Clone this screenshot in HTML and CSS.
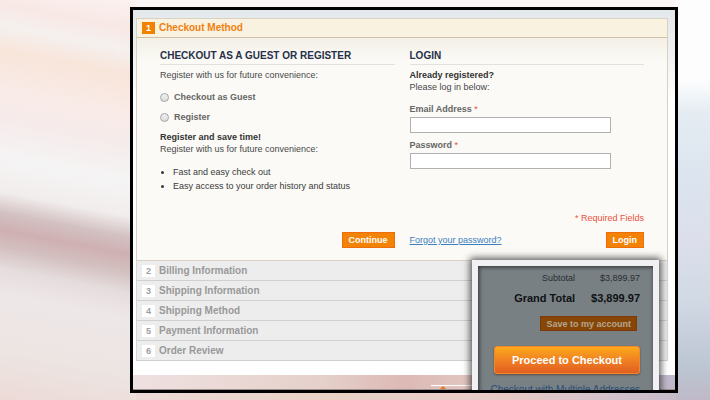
FILE: index.html
```html
<!DOCTYPE html>
<html lang="en">
<head>
<meta charset="utf-8">
<title>Checkout</title>
<link rel="stylesheet" href="styles.css">
</head>
<body>
<main class="frame">
  <section class="checkout">
    <h1 class="active-step"><span class="num">1</span>Checkout Method</h1>
    <div class="panel">
      <form class="column">
        <h2>CHECKOUT AS A GUEST OR REGISTER</h2>
        <p>Register with us for future convenience:</p>
        <div class="choices">
          <label><input type="radio" name="method">Checkout as Guest</label>
          <label><input type="radio" name="method">Register</label>
        </div>
        <p><strong>Register and save time!</strong></p>
        <p>Register with us for future convenience:</p>
        <ul>
          <li>Fast and easy check out</li>
          <li>Easy access to your order history and status</li>
        </ul>
        <div class="actions end"><button class="btn" type="button">Continue</button></div>
      </form>
      <form class="column">
        <h2>LOGIN</h2>
        <p><strong>Already registered?</strong></p>
        <p>Please log in below:</p>
        <div class="field">
          <label for="email">Email Address <span class="star">*</span></label>
          <input id="email" type="email">
        </div>
        <div class="field">
          <label for="password">Password <span class="star">*</span></label>
          <input id="password" type="password">
        </div>
        <p class="required">* Required Fields</p>
        <div class="actions"><a href="#">Forgot your password?</a><button class="btn" type="button">Login</button></div>
      </form>
    </div>
    <ol class="steps">
      <li><span class="num">2</span>Billing Information</li>
      <li><span class="num">3</span>Shipping Information</li>
      <li><span class="num">4</span>Shipping Method</li>
      <li><span class="num">5</span>Payment Information</li>
      <li><span class="num">6</span>Order Review</li>
    </ol>
  </section>
  <div class="footer-strip">
    <svg class="peek" width="44" height="5" viewBox="0 0 44 5" aria-hidden="true"><path d="M0 1.5H44" stroke="#fff"/><path d="M9 5L12 2L15 5Z" fill="#e67a1c"/></svg>
  </div>
  <aside class="summary">
    <table>
      <tr><th>Subtotal</th><td>$3,899.97</td></tr>
      <tr class="grand"><th>Grand Total</th><td>$3,899.97</td></tr>
    </table>
    <button class="save" type="button">Save to my account</button>
    <button class="proceed" type="button">Proceed to Checkout</button>
    <a href="#">Checkout with Multiple Addresses</a>
  </aside>
</main>
</body>
</html>
```
FILE: styles.css
```css
* { box-sizing: border-box; }

body {
  margin: 0;
  min-height: 100vh;
  display: flex;
  padding: 7px 32px 7px 130px;
  font: 9px/12px "Liberation Sans", Arial, sans-serif;
  color: #48484a;
  background:
    linear-gradient(191deg, #fbf2f1, #f8e8e5 7%, #f5f0ee 12%, #f8e5da 18%, #f9ebe7 27%, #f6ebeb 34%, #f5f4f4 43%, #f2eded 51%, #d3c1c2 56%, #cfb0b2 60%, #d3bfbf 64%, #e5dcdd 69%, #eee7e8 75%, #ece5e2 88%, #eddad7) 0 0 / 136px 100% no-repeat,
    linear-gradient(#fdfdfd, #fdfdfd 20%, #e5ecf2 28%, #dbe4ef 45%, #dcdfeb 60%, #d0d9e4 75%, #bcc5d2 92%, #bfb9c8) 100% 0 / 34px 100% no-repeat,
    linear-gradient(#fbf6f5, #fbf6f5) 0 0 / 100% 10px no-repeat,
    linear-gradient(90deg, #eddad7 20%, #e9d2c6 45%, #e8cbc7 70%, #d4c3cb 85%, #bfb9c8);
}

h1, h2, p, ul, ol { margin: 0; padding: 0; }
strong { color: #333; }
input, button { font: inherit; margin: 0; }
button { cursor: pointer; }

.frame {
  flex: 1;
  display: flex;
  flex-direction: column;
  position: relative;
  overflow: hidden;
  border: 3px solid #000;
  background: linear-gradient(#e3e8ec, #eff0ef 40px, #fff 90px);
}

.checkout { margin: 8px 7px 0 3px; }

.active-step {
  display: flex;
  align-items: center;
  height: 20px;
  padding-left: 5px;
  border: 1px solid #d9d1c2;
  border-bottom-color: #d0c0a8;
  background: #f9f2e0;
  color: #f08010;
  font-size: 10px;
}

.num {
  width: 13px;
  margin-right: 4px;
  background: #fff;
  color: #a0a0a0;
  font-size: 9px;
  line-height: 12px;
  text-align: center;
}
.active-step .num { background: #f18200; color: #fff; }

.panel {
  display: grid;
  grid-template-columns: 1fr 1fr;
  gap: 15px;
  padding: 12px 23px;
  border: 1px solid #d9d1c2;
  border-top: 0;
  background: linear-gradient(#f3f0e7, #fbfaf6 24px);
}

.column { display: flex; flex-direction: column; }

h2 {
  margin-bottom: 4px;
  padding-bottom: 2px;
  border-bottom: 1px solid #e2e1df;
  color: #26304a;
  font-size: 10px;
  line-height: 12px;
}

.choices {
  display: grid;
  gap: 8px;
  margin: 10px 0 8px;
  color: #666;
  font-weight: bold;
}
.choices label { display: flex; align-items: center; }
.choices input {
  appearance: none;
  width: 9px;
  height: 9px;
  margin-right: 5px;
  border: 1px solid #a3a3a3;
  border-radius: 50%;
  background: linear-gradient(#f2f2f2, #dcdcdc);
}

ul {
  margin-top: 10px;
  padding-left: 13px;
  line-height: 14px;
  color: #3a3a3a;
}

.actions {
  display: flex;
  align-items: center;
  justify-content: space-between;
  margin-top: auto;
}
.actions.end { justify-content: flex-end; }
.actions a { color: #3b80bf; }

.btn {
  height: 16px;
  padding: 0 6px;
  border: 1px solid #ee6c0c;
  background: #f28306;
  color: #fff;
  font-weight: bold;
  line-height: 12px;
}

.field { margin-top: 10px; }
.field + .field { margin-top: 6px; }
.field label {
  display: block;
  margin-bottom: 2px;
  color: #666;
  font-weight: bold;
}
.star { color: #eb4b3a; font-weight: normal; }
.field input {
  display: block;
  width: 86%;
  height: 16px;
  border: 1px solid #b0b0b0;
  background: #fff;
}

.required {
  margin: 43px 0 8px;
  color: #eb5040;
  text-align: right;
}

.steps {
  list-style: none;
  border: 1px solid #d6d6d6;
  border-width: 0 1px;
}
.steps li {
  display: flex;
  align-items: center;
  height: 20px;
  padding-left: 5px;
  border-bottom: 1px solid #d0d0d0;
  background: #ededed;
  color: #999;
  font-size: 10px;
  font-weight: bold;
}

.footer-strip {
  display: flex;
  flex: 1;
  align-items: flex-end;
  margin-top: 14px;
  padding-left: 55%;
  border-bottom: 1px solid #a09090;
  background: linear-gradient(90deg, #efe1e1, #e5d0ca 35%, #ddb9b5 50%, #e6cfc9 70%, #beb8cb);
}

.summary {
  position: absolute;
  right: 16px;
  top: 250px;
  width: 187px;
  height: 150px;
  display: flex;
  flex-direction: column;
  align-items: flex-end;
  padding: 6px 13px 0 16px;
  border: 6px solid #f1f1f4;
  background: #788084;
  box-shadow: 0 0 7px 2px rgba(0, 0, 0, .65), inset 1px 1px 4px rgba(0, 0, 0, .65);
}
.summary table { border-collapse: collapse; }
.summary th, .summary td {
  padding: 0 0 0 16px;
  color: #2c2e30;
  font-weight: normal;
  text-align: right;
}
.summary .grand th, .summary .grand td {
  padding-top: 8px;
  color: #101114;
  font-size: 11px;
  font-weight: bold;
}
.save {
  height: 15px;
  margin: 12px 3px 15px;
  padding: 0 5px;
  border: 1px solid #7c3909;
  background: #874605;
  color: #b5a793;
  font-weight: bold;
  line-height: 12px;
}
.proceed {
  align-self: stretch;
  height: 28px;
  border: 1px solid #f08a28;
  border-radius: 3px;
  background: linear-gradient(#fcaa1c, #f08122 50%, #e25e22);
  box-shadow: 0 1px 2px rgba(70, 40, 20, .6);
  color: #fff;
  font-size: 11px;
  font-weight: bold;
}
.summary a {
  margin-top: 10px;
  color: #294d76;
  font-size: 10px;
  text-decoration: none;
  white-space: nowrap;
}
```
